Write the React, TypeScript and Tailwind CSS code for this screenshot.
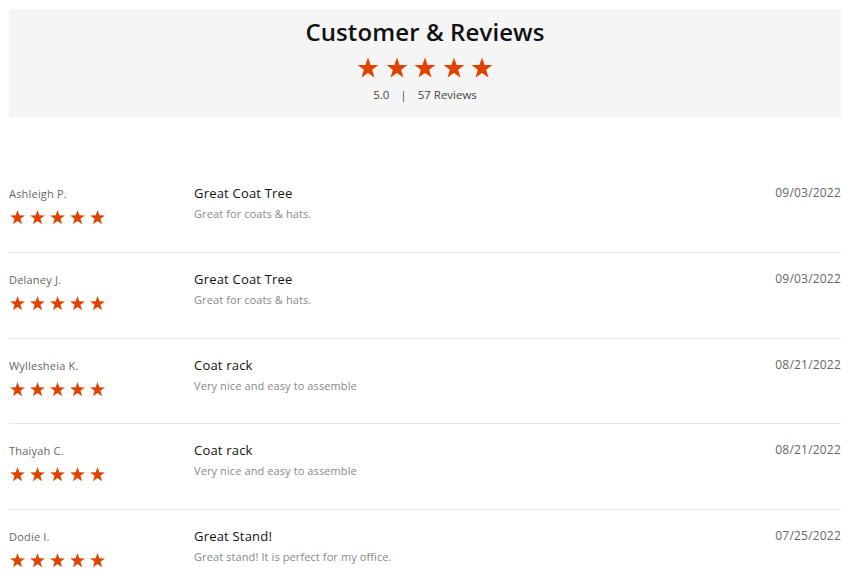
import React from "react";

const Star = ({ size }: { size: number }) => (
  <svg width={size} height={size} viewBox="0 0 24 24" className="block">
    <polygon
      fill="#e04300"
      points="12,1.5 14.59,8.94 22.46,9.1 16.18,13.86 18.47,21.4 12,16.9 5.53,21.4 7.82,13.86 1.54,9.1 9.41,8.94"
    />
  </svg>
);

const reviews = [
  { name: "Ashleigh P.", title: "Great Coat Tree", body: "Great for coats & hats.", date: "09/03/2022" },
  { name: "Delaney J.", title: "Great Coat Tree", body: "Great for coats & hats.", date: "09/03/2022" },
  { name: "Wyllesheia K.", title: "Coat rack", body: "Very nice and easy to assemble", date: "08/21/2022" },
  { name: "Thaiyah C.", title: "Coat rack", body: "Very nice and easy to assemble", date: "08/21/2022" },
  { name: "Dodie I.", title: "Great Stand!", body: "Great stand! It is perfect for my office.", date: "07/25/2022" },
];

export default function App() {
  return (
    <div
      className="w-[850px] h-[580px] overflow-hidden bg-white px-[9px] pt-[9px]"
      style={{ fontFamily: '"Open Sans", "DejaVu Sans", sans-serif' }}
    >
      <div className="h-[108px] bg-[#f5f5f5] flex flex-col items-center pt-[11px]">
        <div className="text-[24px] leading-[24px] font-semibold text-[#111] h-[24px] tracking-[0.1px]">Customer &amp; Reviews</div>
        <div className="flex gap-[4.5px] mt-[12px]">
          {[0, 1, 2, 3, 4].map((i) => (
            <Star key={i} size={24} />
          ))}
        </div>
        <div className="mt-[8px] text-[11.5px] leading-[14px] text-[#444] flex">
          <span>5.0</span>
          <span className="mx-[11px]">|</span>
          <span>57 Reviews</span>
        </div>
      </div>
      <div className="mt-[50px]">
        {reviews.map((r, i) => (
          <div key={i} className="h-[85.75px] border-b border-[#e5e5e5] flex pt-[20px]">
            <div className="w-[185px] flex flex-col">
              <div className="text-[11px] leading-[14px] text-[#666] tracking-[0.2px]">{r.name}</div>
              <div className="flex gap-[3px] mt-[8px]">
                {[0, 1, 2, 3, 4].map((k) => (
                  <Star key={k} size={17} />
                ))}
              </div>
            </div>
            <div className="flex-1 flex flex-col -mt-[2px]">
              <div className="text-[13px] leading-[16px] text-[#111] tracking-[0.2px]">{r.title}</div>
              <div className="text-[11px] leading-[14px] text-[#888] mt-[6px] tracking-[0.1px]">{r.body}</div>
            </div>
            <div className="text-[12px] leading-[16px] text-[#666] -mt-[2px] tracking-[0.2px]">{r.date}</div>
          </div>
        ))}
      </div>
    </div>
  );
}
